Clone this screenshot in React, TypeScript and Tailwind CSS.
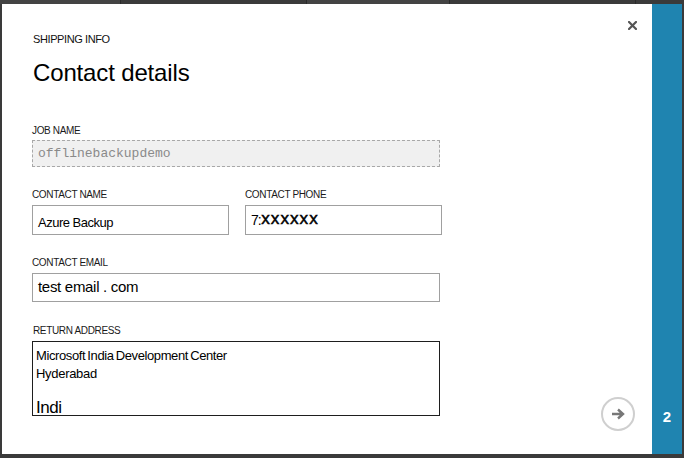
import type { ReactNode } from "react";

const sans = "font-['Liberation_Sans',Arial,sans-serif]";
const mono = "font-['Liberation_Mono','Courier_New',monospace]";

function Label({ children, className = "" }: { children: ReactNode; className?: string }) {
  return (
    <div className={`text-[10px] leading-[11px] uppercase text-[#1a1a1a] tracking-[-0.35px] ${className}`}>
      {children}
    </div>
  );
}

export default function App() {
  return (
    <div className={`flex h-[458px] w-[684px] flex-col overflow-hidden bg-[#3a3a3a] ${sans}`}>
      {/* strip of the page behind the dialog */}
      <div className="flex h-[4px] shrink-0">
        <div className="w-[121px] border-r border-[#2a2a2a] bg-[#434343]" />
        <div className="w-[186px] border-r border-[#2a2a2a] bg-[#3a3a3a]" />
        <div className="w-[143px] border-r border-[#2a2a2a] bg-[#434343]" />
        <div className="w-[186px] border-r border-[#2a2a2a] bg-[#3a3a3a]" />
      </div>

      <div className="flex h-[450px] shrink-0 pl-[2px]">
        <div className="relative flex w-[650px] flex-col bg-white pl-[30px] pt-[29px]">
          <button
            type="button"
            aria-label="Close"
            className="absolute right-[15px] top-[17px] flex h-[8px] w-[9px] items-center justify-center"
          >
            <svg width="9" height="9" viewBox="0 0 9 9">
              <path d="M1 1L8 8M8 1L1 8" stroke="#555" strokeWidth="2.2" strokeLinecap="square" />
            </svg>
          </button>

          <div className="ml-[1px] text-[11px] leading-[13px] tracking-[-0.4px] text-[#111]">SHIPPING INFO</div>
          <h1 className="ml-[1px] mt-[13px] text-[24px] leading-[28px] tracking-[-0.15px] text-black">
            Contact details
          </h1>

          <Label className="mt-[38px]">Job name</Label>
          <div className="mt-[4px] flex h-[27px] w-[408px] items-center border border-dashed border-[#a8a8a8] bg-[#f0f0f0] pl-[5px]">
            <span className={`${mono} text-[13px] text-[#8a8a8a]`}>offlinebackupdemo</span>
          </div>

          <div className="mt-[22px] flex gap-[16px]">
            <div className="flex w-[197px] flex-col">
              <Label>Contact name</Label>
              <div className="mt-[5px] flex h-[30px] items-center border border-[#a0a0a0] pl-[5px] pt-[5px]">
                <span className="text-[13px] tracking-[-0.5px] text-black">Azure Backup</span>
              </div>
            </div>
            <div className="flex w-[197px] flex-col">
              <Label>Contact phone</Label>
              <div className="mt-[5px] flex h-[30px] items-center border border-[#a0a0a0] pl-[5px]">
                <span className="text-[14px] tracking-[-1px] text-black">7:</span>
                <span className={`${mono} text-[16px] text-black [-webkit-text-stroke:0.5px_black]`}>xxxxxx</span>
              </div>
            </div>
          </div>

          <Label className="mt-[22px]">Contact email</Label>
          <div className="mt-[5px] flex h-[29px] w-[408px] items-center border border-[#a0a0a0] pl-[5px]">
            <span className="text-[15px] tracking-[-0.3px] text-black">test email . com</span>
          </div>

          <Label className="ml-[1px] mt-[23px]">Return address</Label>
          <div className="mt-[5px] h-[75px] w-[408px] overflow-hidden border border-[#1e1e1e] pl-[3px] pt-[5px] text-black">
            <div className="text-[13px] leading-[18px] tracking-[-0.4px] [word-spacing:-1px]">
              Microsoft India Development Center
            </div>
            <div className="text-[13px] leading-[18px] tracking-[-0.3px]">Hyderabad</div>
            <div className="mt-[15px] text-[17px] leading-[20px] tracking-[-0.5px]">Indi</div>
          </div>

          <button
            type="button"
            aria-label="Next"
            className="absolute bottom-[23px] right-[17px] flex h-[34px] w-[34px] items-center justify-center rounded-full border-2 border-[#cfcfcf]"
          >
            <svg width="14" height="12" viewBox="0 0 14 12">
              <path d="M1 6H12M7 1.5L12 6L7 10.5" fill="none" stroke="#777" strokeWidth="2.4" />
            </svg>
          </button>
        </div>

        <div className="flex w-[30px] flex-col items-center justify-end bg-[#1f84b0] pb-[28px]">
          <span className="text-[15px] font-bold leading-[18px] text-white">2</span>
        </div>
      </div>
    </div>
  );
}
